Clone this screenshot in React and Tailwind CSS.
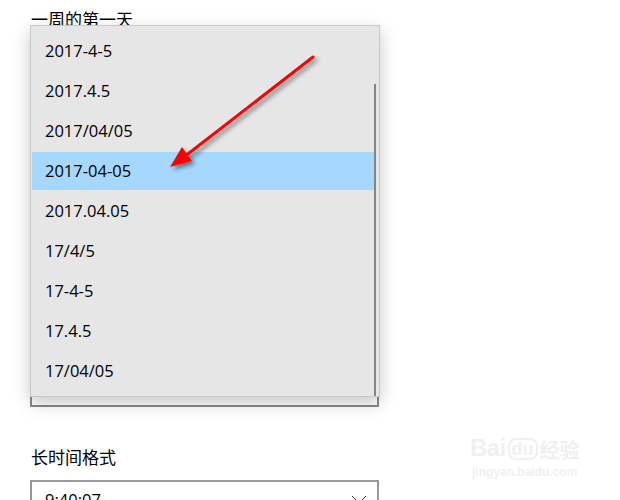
import React from "react";

const formats = [
  "2017-4-5",
  "2017.4.5",
  "2017/04/05",
  "2017-04-05",
  "2017.04.05",
  "17/4/5",
  "17-4-5",
  "17.4.5",
  "17/04/05",
];

const font = { fontFamily: '"Open Sans", "Noto Sans CJK SC", sans-serif' };

function Arrow() {
  return (
    <svg
      className="absolute left-0 top-0 pointer-events-none"
      width="620"
      height="500"
      viewBox="0 0 620 500"
    >
      <defs>
        <filter id="sh" x="-20%" y="-20%" width="140%" height="140%">
          <feDropShadow dx="3" dy="3" stdDeviation="2" floodColor="#000" floodOpacity="0.45" />
        </filter>
      </defs>
      <g filter="url(#sh)">
        <line x1="313" y1="57" x2="184" y2="157" stroke="#ff0000" strokeWidth="3" strokeLinecap="round" />
        <polygon points="170,167 182,147 192,161" fill="#ff0000" />
      </g>
    </svg>
  );
}

function Watermark() {
  return (
    <div className="absolute left-[470px] top-[436px] flex flex-col items-start text-[#f0f0f0] select-none">
      <div className="flex items-end gap-[2px] leading-none">
        <span className="text-[24px] font-bold tracking-tight" style={{ fontFamily: '"Liberation Sans", sans-serif' }}>
          Bai
        </span>
        <span className="relative text-[18px] font-bold border-2 border-[#f0f0f0] rounded-[8px] px-[2px]" style={{ fontFamily: '"Liberation Sans", sans-serif' }}>
          du
        </span>
        <span className="text-[20px] font-bold" style={{ fontFamily: '"Noto Sans CJK SC", sans-serif' }}>
          经验
        </span>
      </div>
      <div className="text-[12px] font-bold mt-[3px] ml-[2px]" style={{ fontFamily: '"Liberation Sans", sans-serif' }}>
        jingyan.baidu.com
      </div>
    </div>
  );
}

export default function App() {
  return (
    <div className="relative w-[620px] h-[500px] bg-white overflow-hidden text-black" style={font}>
      <div className="pl-[30px]">
        <div className="h-[25px] pt-[9px] text-[17px] leading-[22px] pl-[1px] whitespace-nowrap">一周的第一天</div>

        <div className="relative w-[349px] h-[382px] border-2 border-[#8a8a8a]">
          <div className="absolute -left-[2px] -top-[2px] w-[350px] h-[372px] bg-[#e6e6e6] border border-[#c8c8c8] shadow-[0_6px_16px_rgba(0,0,0,0.22)] pt-[5px] pl-[1px] pr-[3px]">
            {formats.map((f, i) => (
              <div key={f} className="h-10 py-[1px]">
                <div
                  className={
                    "h-full flex items-center pl-[13px] text-[16.5px] " +
                    (i === 3 ? "bg-[#a6d7fc]" : "")
                  }
                >
                  {f}
                </div>
              </div>
            ))}
            <div className="absolute right-[3px] top-[58px] bottom-0 w-[2px] bg-[#858585]" />
          </div>
        </div>

        <div className="mt-[39px] text-[17px] leading-[24px] pl-[1px]">长时间格式</div>

        <div className="mt-[10px] w-[349px] h-10 border-2 border-[#999999] flex items-center justify-between pl-[13px] pr-[10px]">
          <span className="text-[16.5px]">9:40:07</span>
          <svg width="16" height="10" viewBox="0 0 16 10">
            <path d="M1 1 L8 8 L15 1" fill="none" stroke="#333" strokeWidth="1" />
          </svg>
        </div>
      </div>

      <Watermark />
      <Arrow />
    </div>
  );
}
